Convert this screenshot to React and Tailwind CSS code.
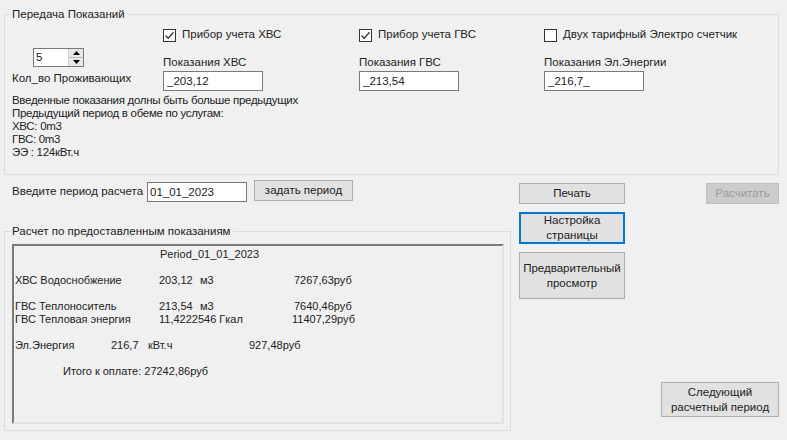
import React, { useState } from "react";

const font = { fontFamily: '"Liberation Sans", Arial, sans-serif' };

const CheckBox = ({ checked, label, onToggle }) => (
  <label className="flex items-center h-[14px] cursor-default whitespace-nowrap" onClick={onToggle}>
    <span className="w-[13px] h-[13px] border border-[#333333] bg-white flex items-center justify-center shrink-0">
      {checked && (
        <svg width="11" height="11" viewBox="0 0 11 11">
          <path d="M1.5 5.5 L4.2 8.2 L9.5 2.2" fill="none" stroke="#333333" strokeWidth="1.3" />
        </svg>
      )}
    </span>
    <span className="ml-[6px]">{label}</span>
  </label>
);

const WinButton = ({ children, className = "", border = "border border-[#adadad]" }) => (
  <button
    type="button"
    className={
      "bg-[#e1e1e1] text-[#222] text-[11.5px] leading-[15px] flex items-center justify-center text-center whitespace-nowrap " +
      border +
      " " +
      className
    }
  >
    {children}
  </button>
);

const Reading = ({ checked, onToggle, check, label, value, width }) => (
  <div className={"flex flex-col pt-[7px] " + width}>
    <CheckBox checked={checked} label={check} onToggle={onToggle} />
    <div className="mt-[13px] leading-[14px] whitespace-nowrap">{label}</div>
    <input
      readOnly
      value={value}
      className="mt-[2px] w-[100px] h-[20px] border border-[#7a7a7a] bg-white px-[3px] text-[11.5px] outline-none"
    />
  </div>
);

export default function App() {
  const [cold, setCold] = useState(true);
  const [hot, setHot] = useState(true);
  const [twoRate, setTwoRate] = useState(false);

  return (
    <div className="w-[787px] h-[440px] bg-[#f0f0f0] text-[#222] text-[11.5px] px-[4px] pt-[7px] overflow-hidden" style={font}>
      <fieldset className="border border-[#dcdcdc] pl-[7px] pb-[15px] w-[775px]">
        <legend className="-ml-[2px] px-[2px] leading-[14px]">Передача Показаний</legend>
        <div className="flex">
          <div className="w-[151px] flex flex-col pt-[27px]">
            <div className="ml-[21px] w-[51px] h-[19px] border border-[#7a7a7a] bg-white flex">
              <span className="flex-1 pl-[2px] leading-[17px]">5</span>
              <div className="w-[15px] flex flex-col border-l border-[#cfcfcf]">
                <div className="flex-1 bg-[#e8e8e8] border-b border-[#bcbcbc] flex items-center justify-center">
                  <svg width="7" height="4" viewBox="0 0 7 4"><path d="M0 4 L3.5 0 L7 4 Z" fill="#000" /></svg>
                </div>
                <div className="flex-1 bg-[#e8e8e8] flex items-center justify-center">
                  <svg width="7" height="4" viewBox="0 0 7 4"><path d="M0 0 L3.5 4 L7 0 Z" fill="#000" /></svg>
                </div>
              </div>
            </div>
            <div className="mt-[4px] leading-[14px] whitespace-nowrap">Кол_во Проживающих</div>
          </div>
          <Reading
            width="w-[196px]"
            checked={cold}
            onToggle={() => setCold(!cold)}
            check="Прибор учета ХВС"
            label="Показания ХВС"
            value="_203,12"
          />
          <Reading
            width="w-[185px]"
            checked={hot}
            onToggle={() => setHot(!hot)}
            check="Прибор учета ГВС"
            label="Показания ГВС"
            value="_213,54"
          />
          <Reading
            width="w-[220px]"
            checked={twoRate}
            onToggle={() => setTwoRate(!twoRate)}
            check="Двух тарифный Электро счетчик"
            label="Показания Эл.Энергии"
            value="_216,7_"
          />
        </div>
        <div className="mt-[3px] leading-[13px] whitespace-nowrap tracking-[-0.3px]">
          <div>Введенные показания долны быть больше предыдущих</div>
          <div>Предыдущий период в обеме по услугам:</div>
          <div>ХВС: 0m3</div>
          <div>ГВС: 0m3</div>
          <div>ЭЭ : 124кВт.ч</div>
        </div>
      </fieldset>

      <div className="flex">
        <div className="w-[507px] flex flex-col">
          <div className="mt-[6px] h-[21px] flex items-center pl-[8px] whitespace-nowrap">
            <span className="w-[135px]">Введите период расчета</span>
            <input
              readOnly
              value="01_01_2023"
              className="w-[100px] h-[20px] border border-[#7a7a7a] bg-white px-[2px] text-[11.5px] outline-none"
            />
            <WinButton className="ml-[7px] w-[99px] h-[21px] -mt-[2px]">задать период</WinButton>
          </div>

          <fieldset className="mt-[22px] border border-[#dcdcdc] pb-[6px]">
            <legend className="ml-[5px] px-[2px] leading-[14px]">Расчет по предоставленным показаниям</legend>
            <div className="mt-[6px] ml-[7px] w-[492px] h-[180px] border-2 border-t-[#7a7a7a] border-l-[#7a7a7a] border-r-[#e3e3e3] border-b-[#e3e3e3] text-[11px] leading-[13px] pt-[2px] pl-[1px] whitespace-nowrap">
              <div className="pl-[145px]">Period_01_01_2023</div>
              <div className="h-[13px]" />
              <div className="flex">
                <span className="w-[144px]">ХВС Водоснобжение</span>
                <span className="w-[41px]">203,12</span>
                <span className="w-[94px]">м3</span>
                <span>7267,63руб</span>
              </div>
              <div className="h-[13px]" />
              <div className="flex">
                <span className="w-[144px]">ГВС Теплоноситель</span>
                <span className="w-[41px]">213,54</span>
                <span className="w-[94px]">м3</span>
                <span>7640,46руб</span>
              </div>
              <div className="flex">
                <span className="w-[144px]">ГВС Тепловая энергия</span>
                <span className="w-[133px]">11,4222546 Гкал</span>
                <span>11407,29руб</span>
              </div>
              <div className="h-[13px]" />
              <div className="flex">
                <span className="w-[96px]">Эл.Энергия</span>
                <span className="w-[37px]">216,7</span>
                <span className="w-[101px]">кВт.ч</span>
                <span>927,48руб</span>
              </div>
              <div className="h-[13px]" />
              <div className="pl-[48px]">Итого к оплате: 27242,86руб</div>
            </div>
          </fieldset>
        </div>

        <div className="ml-[8px] w-[260px] flex flex-col pt-[8px]">
          <div className="flex justify-between">
            <WinButton className="w-[106px] h-[21px]">Печать</WinButton>
            <button
              type="button"
              disabled
              className="w-[73px] h-[21px] bg-[#cccccc] border border-[#bfbfbf] text-[#9a9a9a] text-[11.5px]"
            >
              Расчитать
            </button>
          </div>
          <WinButton border="border-2 border-[#0078d7]" className="mt-[8px] w-[106px] h-[32px]">
            Настройка
            <br />
            страницы
          </WinButton>
          <WinButton className="mt-[8px] w-[106px] h-[47px]">
            Предварительный
            <br />
            просмотр
          </WinButton>
          <WinButton className="mt-[83px] w-[118px] h-[35px] self-end">
            Следующий
            <br />
            расчетный период
          </WinButton>
        </div>
      </div>
    </div>
  );
}
